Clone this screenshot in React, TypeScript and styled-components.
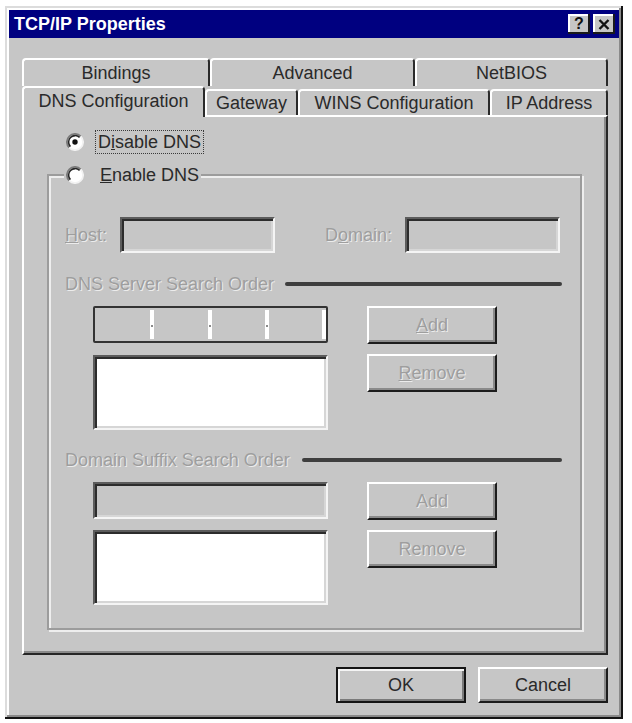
import React from 'react';
import styled, { createGlobalStyle } from 'styled-components';

const FACE = '#c6c6c6';
const DIS = '#9e9e9e';

const GlobalStyle = createGlobalStyle`
  html, body { margin: 0; padding: 0; background: #ffffff; }
  body { font-family: "Liberation Sans", Arial, sans-serif; }
  * { box-sizing: border-box; }
`;

const Page = styled.div`
  padding: 6px 0 0 5px;
`;

const Dialog = styled.div`
  width: 618px;
  height: 713px;
  background: ${FACE};
  padding: 4px;
  display: flex;
  flex-direction: column;
  box-shadow: inset -2px -2px 0 #141414, inset 2px 2px 0 #dcdcdc,
    inset -4px -4px 0 #8a8a8a, inset 4px 4px 0 #ffffff;
`;

const TitleBar = styled.div`
  height: 28px;
  background: #000080;
  display: flex;
  align-items: center;
  justify-content: space-between;
  padding: 0 4px 0 5px;
`;

const TitleText = styled.span`
  color: #ffffff;
  font-weight: bold;
  font-size: 18px;
`;

const TitleButtons = styled.div`
  display: flex;
  gap: 3px;
`;

const TitleButton = styled.div`
  width: 22px;
  height: 20px;
  background: ${FACE};
  box-shadow: inset -2px -2px 0 #1a1a1a, inset 2px 2px 0 #ffffff;
  display: flex;
  align-items: center;
  justify-content: center;
  font-weight: bold;
  font-size: 16px;
  color: #111;
  line-height: 1;
`;

const Body = styled.div`
  flex: 1;
  display: flex;
  flex-direction: column;
  padding: 20px 11px 0 13px;
`;

const TabRow = styled.div<{ $front?: boolean }>`
  display: flex;
  align-items: flex-end;
  height: ${(p) => (p.$front ? 29 : 28)}px;
  width: 586px;
`;

const Tab = styled.div<{ $w: number; $selected?: boolean; $back?: boolean }>`
  width: ${(p) => p.$w}px;
  height: ${(p) => (p.$selected ? 31 : p.$back ? 28 : 26)}px;
  margin-bottom: ${(p) => (p.$selected ? -2 : 0)}px;
  background: ${FACE};
  border-top: 2px solid #ffffff;
  border-left: 2px solid #ffffff;
  border-right: 2px solid #2a2a2a;
  border-radius: 4px 4px 0 0;
  display: flex;
  align-items: center;
  justify-content: center;
  padding-bottom: ${(p) => (p.$selected ? 3 : 0)}px;
  font-size: 18px;
  color: #2a2a2a;
  white-space: nowrap;
  position: relative;
  z-index: ${(p) => (p.$selected ? 2 : 1)};
`;

const Panel = styled.div`
  width: 586px;
  height: 540px;
  border-top: 2px solid #ffffff;
  border-left: 2px solid #ffffff;
  border-right: 2px solid #262626;
  border-bottom: 2px solid #262626;
  box-shadow: inset -2px -2px 0 #8a8a8a;
  padding: 12px 0 0 23px;
  display: flex;
  flex-direction: column;
`;

const RadioRow = styled.div`
  display: flex;
  align-items: center;
  height: 26px;
  padding-left: 19px;
  gap: 11px;
  font-size: 18px;
  color: #2a2a2a;
`;

const FocusLabel = styled.span`
  border: 1px dotted #3a3a3a;
  padding: 0 2px;
  line-height: 22px;
`;

const Group = styled.fieldset`
  margin: 7px 0 0 0;
  width: 535px;
  height: 468px;
  border: 2px solid #9c9c9c;
  box-shadow: inset 2px 2px 0 #eeeeee, 2px 2px 0 #eeeeee;
  padding: 0 18px 0 15px;
  min-width: 0;
  display: block;
`;

const Legend = styled.legend`
  padding: 0 2px;
  background: ${FACE};
  display: flex;
  align-items: center;
  gap: 16px;
  height: 26px;
  font-size: 18px;
  color: #2a2a2a;
`;

const GroupContent = styled.div`
  padding-left: 1px;
  padding-top: 29px;
  display: flex;
  flex-direction: column;
`;

const FieldRow = styled.div`
  display: flex;
  align-items: center;
  height: 36px;
`;

const DisabledLabel = styled.span<{ $w?: number; $ml?: number }>`
  width: ${(p) => (p.$w ? `${p.$w}px` : 'auto')};
  margin-left: ${(p) => p.$ml ?? 0}px;
  flex: none;
  font-size: 18px;
  color: ${DIS};
  text-shadow: 1px 1px 0 #ececec;
  white-space: nowrap;
`;

const Sunken = styled.div<{ $w: number; $h: number; $white?: boolean }>`
  width: ${(p) => p.$w}px;
  height: ${(p) => p.$h}px;
  flex: none;
  background: ${(p) => (p.$white ? '#ffffff' : FACE)};
  border-top: 2px solid #5c5c5c;
  border-left: 2px solid #5c5c5c;
  border-right: 2px solid #f4f4f4;
  border-bottom: 2px solid #f4f4f4;
  box-shadow: inset 2px 2px 0 #2c2c2c, inset -2px -2px 0 #d6d6d6;
`;

const IpField = styled.div`
  width: 235px;
  height: 37px;
  flex: none;
  display: flex;
  background: ${FACE};
  border: 2px solid #333333;
  border-radius: 2px;
  padding: 2px 0 2px 2px;
`;

const IpSegment = styled.div<{ $dot?: boolean }>`
  flex: 1;
  border-right: 4px solid #ffffff;
  position: relative;
  &::after {
    content: '';
    display: ${(p) => (p.$dot ? 'block' : 'none')};
    position: absolute;
    right: -3px;
    top: 50%;
    width: 2px;
    height: 2px;
    background: #8a8a8a;
  }
`;

const SectionHeader = styled.div<{ $mt: number; $gap: number }>`
  display: flex;
  align-items: center;
  height: 22px;
  margin-top: ${(p) => p.$mt}px;
  gap: ${(p) => p.$gap}px;
`;

const SectionLine = styled.div`
  flex: 1;
  height: 4px;
  background: #3e3e3e;
  border-radius: 2px;
`;

const SectionBody = styled.div`
  display: flex;
  margin-top: 11px;
  padding-left: 28px;
  gap: 39px;
`;

const Column = styled.div<{ $gap: number }>`
  display: flex;
  flex-direction: column;
  gap: ${(p) => p.$gap}px;
`;

const Button = styled.div<{ $disabled?: boolean; $default?: boolean; $h?: number }>`
  width: 130px;
  height: ${(p) => p.$h ?? 38}px;
  background: ${FACE};
  display: flex;
  align-items: center;
  justify-content: center;
  font-size: 18px;
  color: ${(p) => (p.$disabled ? DIS : '#2a2a2a')};
  text-shadow: ${(p) => (p.$disabled ? '1px 1px 0 #ececec' : 'none')};
  ${(p) =>
    p.$default
      ? `border: 2px solid #151515;
         box-shadow: inset 2px 2px 0 #f4f4f4, inset -2px -2px 0 #7a7a7a;`
      : `border-top: 2px solid #ffffff;
         border-left: 2px solid #ffffff;
         border-right: 2px solid #1c1c1c;
         border-bottom: 2px solid #1c1c1c;
         box-shadow: inset -2px -2px 0 #8a8a8a;`}
`;

const Footer = styled.div`
  width: 586px;
  display: flex;
  justify-content: flex-end;
  gap: 12px;
  margin-top: 12px;
`;

const Radio: React.FC<{ checked?: boolean }> = ({ checked }) => (
  <svg width="18" height="18" viewBox="0 0 16 16" style={{ flex: 'none' }}>
    <circle cx="8" cy="8" r="7.2" fill="#ffffff" />
    <path d="M2.9 13.1 A7.2 7.2 0 0 1 13.1 2.9" fill="none" stroke="#7a7a7a" strokeWidth="1.6" />
    <path d="M3.9 12.1 A5.8 5.8 0 0 1 12.1 3.9" fill="none" stroke="#262626" strokeWidth="1.4" />
    <path d="M13.1 2.9 A7.2 7.2 0 0 1 2.9 13.1" fill="none" stroke="#f2f2f2" strokeWidth="1.6" />
    {checked && <circle cx="8" cy="8" r="2.4" fill="#111111" />}
  </svg>
);

const CloseGlyph = () => (
  <svg width="12" height="11" viewBox="0 0 12 11">
    <path d="M1.5 1 L10.5 10 M10.5 1 L1.5 10" stroke="#111" strokeWidth="2.4" />
  </svg>
);

const App: React.FC = () => (
  <>
    <GlobalStyle />
    <Page>
      <Dialog>
        <TitleBar>
          <TitleText>TCP/IP Properties</TitleText>
          <TitleButtons>
            <TitleButton>?</TitleButton>
            <TitleButton>
              <CloseGlyph />
            </TitleButton>
          </TitleButtons>
        </TitleBar>
        <Body>
          <TabRow>
            <Tab $w={188} $back>Bindings</Tab>
            <Tab $w={205} $back>Advanced</Tab>
            <Tab $w={193} $back>NetBIOS</Tab>
          </TabRow>
          <TabRow $front>
            <Tab $w={183} $selected>DNS Configuration</Tab>
            <Tab $w={93}>Gateway</Tab>
            <Tab $w={192}>WINS Configuration</Tab>
            <Tab $w={118}>IP Address</Tab>
          </TabRow>
          <Panel>
            <RadioRow>
              <Radio checked />
              <FocusLabel>
                D<u>i</u>sable DNS
              </FocusLabel>
            </RadioRow>
            <Group>
              <Legend>
                <Radio />
                <span>
                  <u>E</u>nable DNS
                </span>
              </Legend>
              <GroupContent>
                <FieldRow>
                  <DisabledLabel $w={55}>
                    <u>H</u>ost:
                  </DisabledLabel>
                  <Sunken $w={155} $h={36} />
                  <DisabledLabel $w={80} $ml={50}>
                    D<u>o</u>main:
                  </DisabledLabel>
                  <Sunken $w={155} $h={36} />
                </FieldRow>
                <SectionHeader $mt={20} $gap={11}>
                  <DisabledLabel>DNS Server Search Order</DisabledLabel>
                  <SectionLine />
                </SectionHeader>
                <SectionBody>
                  <Column $gap={12}>
                    <IpField>
                      <IpSegment $dot />
                      <IpSegment $dot />
                      <IpSegment $dot />
                      <IpSegment />
                    </IpField>
                    <Sunken $w={235} $h={75} $white />
                  </Column>
                  <Column $gap={10}>
                    <Button $disabled>
                      <u>A</u>dd
                    </Button>
                    <Button $disabled>
                      <u>R</u>emove
                    </Button>
                  </Column>
                </SectionBody>
                <SectionHeader $mt={19} $gap={12}>
                  <DisabledLabel>Domain Suffix Search Order</DisabledLabel>
                  <SectionLine />
                </SectionHeader>
                <SectionBody>
                  <Column $gap={11}>
                    <Sunken $w={235} $h={37} />
                    <Sunken $w={235} $h={75} $white />
                  </Column>
                  <Column $gap={10}>
                    <Button $disabled>Add</Button>
                    <Button $disabled>Remove</Button>
                  </Column>
                </SectionBody>
              </GroupContent>
            </Group>
          </Panel>
          <Footer>
            <Button $default $h={36}>OK</Button>
            <Button $h={36}>Cancel</Button>
          </Footer>
        </Body>
      </Dialog>
    </Page>
  </>
);

export default App;
